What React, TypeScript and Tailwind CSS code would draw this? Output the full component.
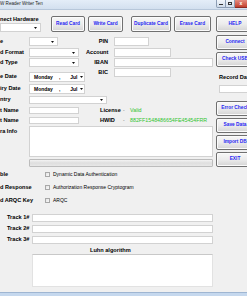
import React from 'react';

const btn =
  'flex shrink-0 items-center justify-center rounded-[2px] border border-[#707070] bg-linear-to-b from-[#f7f7f7] via-[#ececec] to-[#d4d4d4] text-[4.8px] font-bold leading-none text-[#2626f2] whitespace-nowrap shadow-[inset_0_0_0_1px_#fbfbfb]';
const field = 'shrink-0 bg-white border border-[#d2d2d2]';
const label = 'shrink-0 text-[5.6px] font-bold leading-none text-black whitespace-nowrap';

const Arrow = () => (
  <svg width="3" height="2" viewBox="0 0 3 2" className="shrink-0">
    <path d="M0 0h3L1.5 2z" fill="#111" />
  </svg>
);

const Combo = ({ className = '' }: { className?: string }) => (
  <div className={`${field} flex items-center justify-end pr-[3px] ${className}`}>
    <Arrow />
  </div>
);

const DateBox = () => (
  <div className={`${field} flex h-[10px] w-[56px] items-center pl-[4px] pr-[3px] text-[5px] font-bold leading-none`}>
    <span>Monday</span>
    <span className="ml-[6px]">,</span>
    <span className="ml-[10px]">Jul</span>
    <span className="ml-[2px]">
      <Arrow />
    </span>
  </div>
);

const Row = ({ text, children, className = '' }: { text: string; children: React.ReactNode; className?: string }) => (
  <div className={`flex items-center ${className}`}>
    <div className={`${label} w-[29px]`}>{text}</div>
    {children}
  </div>
);

const RightRow = ({ text, children, className = '' }: { text: string; children: React.ReactNode; className?: string }) => (
  <div className={`flex h-[9px] items-center ${className}`}>
    <div className={`${label} w-[24px] pr-[2px] text-right`}>{text}</div>
    <div className="ml-[4px] flex">{children}</div>
  </div>
);

const Check = ({ left, text }: { left: string; text: string }) => (
  <div className="flex h-[13px] items-center">
    <div className={`${label} w-[45px]`}>{left}</div>
    <div className="h-[5px] w-[5px] shrink-0 border border-[#a8a8a8] bg-linear-to-br from-[#e4e4e4] to-[#f8f8f8]" />
    <div className="ml-[3px] whitespace-nowrap text-[5px] leading-none text-black">{text}</div>
  </div>
);

const Track = ({ text, className = '' }: { text: string; className?: string }) => (
  <div className={`flex h-[8px] items-center ${className}`}>
    <div className={`${label} w-[32px] pl-[7px]`}>{text}</div>
    <div className={`${field} h-[8px] w-[181px]`} />
  </div>
);

export default function App() {
  return (
    <div className="flex h-[296px] w-[247px] flex-col overflow-hidden bg-[#f0f0f0] font-['Liberation_Sans',Arial,sans-serif]">
      {/* title bar */}
      <div className="flex h-[10px] shrink-0 items-start border-b border-[#b7c7da] bg-linear-to-b from-[#e4edf8] to-[#d3e0ef]">
        <div className="pt-[2px] text-[4.6px] leading-none text-[#1e1e1e] whitespace-nowrap">W Reader Writer Ten</div>
        <div className="ml-auto flex h-[8px]">
          <div className="flex w-[10px] items-end justify-center rounded-bl-[2px] border border-t-0 border-[#8c9db4] bg-linear-to-b from-[#f2f6fb] to-[#d0dcea] pb-[2px]">
            <div className="h-[1px] w-[4px] bg-[#333]" />
          </div>
          <div className="flex w-[9px] items-center justify-center border-b border-r border-[#8c9db4] bg-linear-to-b from-[#f2f6fb] to-[#d0dcea]">
            <div className="h-[3px] w-[4px] border border-[#333]" />
          </div>
          <div className="flex w-[12px] items-center justify-center border-b border-[#8a2a22] bg-linear-to-b from-[#e48b7f] to-[#c2402f] text-[5px] font-bold leading-none text-white">
            x
          </div>
        </div>
      </div>

      {/* body */}
      <div className="flex flex-1 pt-[6px]">
        <div className="flex w-[213px] shrink-0 flex-col">
          {/* hardware + top buttons */}
          <div className="flex h-[16px]">
            <div className="flex w-[41px] shrink-0 flex-col">
              <div className={`${label} h-[7px] pt-[1px]`}>nect Hardware</div>
              <Combo className="h-[9px] w-[41px]" />
            </div>
            <div className={`${btn} ml-[10px] w-[34px]`}>Read Card</div>
            <div className={`${btn} ml-[3px] w-[35px]`}>Write Card</div>
            <div className={`${btn} ml-[8px] w-[40px]`}>Duplicate Card</div>
            <div className={`${btn} ml-[3px] w-[37px]`}>Erase Card</div>
          </div>

          {/* card details */}
          <div className="mt-[5px] flex">
            <div className="flex w-[86px] shrink-0 flex-col">
              <Row text="e" className="h-[9px]">
                <Combo className="h-[9px] w-[29px]" />
              </Row>
              <Row text="d Format" className="mt-[2px] h-[9px]">
                <Combo className="h-[9px] w-[50px]" />
              </Row>
              <Row text="d Type" className="mt-[1px] h-[9px]">
                <Combo className="h-[9px] w-[50px]" />
              </Row>
              <Row text="e Date" className="mt-[5px] h-[10px]">
                <DateBox />
              </Row>
              <Row text="iry Date" className="mt-[2px] h-[10px]">
                <DateBox />
              </Row>
              <Row text="ntry" className="mt-[2px] h-[8px]">
                <Combo className="h-[8px] w-[78px]" />
              </Row>
              <Row text="t Name" className="mt-[3px] h-[7px]">
                <div className={`${field} h-[7px] w-[50px]`} />
              </Row>
              <Row text="t Name" className="mt-[3px] h-[7px]">
                <div className={`${field} h-[7px] w-[50px]`} />
              </Row>
            </div>

            <div className="flex flex-1 flex-col">
              <RightRow text="PIN">
                <div className={`${field} h-[9px] w-[35px]`} />
              </RightRow>
              <RightRow text="Account" className="mt-[2px]">
                <div className={`${field} h-[9px] w-[57px]`} />
              </RightRow>
              <RightRow text="IBAN" className="mt-[1px]">
                <div className={`${field} h-[9px] w-[99px]`} />
              </RightRow>
              <RightRow text="BIC" className="mt-[1px]">
                <div className={`${field} h-[9px] w-[57px]`} />
              </RightRow>
              <div className="mt-[30px] flex h-[7px] items-center pl-[14px]">
                <div className={`${label} w-[23px]`}>License</div>
                <div className="w-[7px] text-[5px] leading-none text-[#777]">-</div>
                <div className="text-[5.4px] leading-none text-[#2fc42f]">Valid</div>
              </div>
              <div className="mt-[3px] flex h-[7px] items-center pl-[14px]">
                <div className={`${label} w-[23px]`}>HWID</div>
                <div className="w-[7px] text-[5px] leading-none text-[#777]">-</div>
                <div className="whitespace-nowrap text-[5.3px] leading-none text-[#2fc42f]">882FF1548486654FE45454FRR</div>
              </div>
            </div>
          </div>

          {/* extra info */}
          <div className="mt-[2px] flex">
            <div className={`${label} w-[29px] pt-[3px]`}>ra Info</div>
            <div className={`${field} h-[31px] w-[184px]`} />
          </div>
          <div className="ml-[29px] mt-[2px] h-[8px] w-[184px] shrink-0 rounded-[1px] border border-[#bcbcbc] bg-linear-to-b from-[#f3f3f3] via-[#dedede] to-[#e8e8e8]" />

          {/* options */}
          <div className="mt-[1px] flex flex-col">
            <Check left="ble" text="Dynamic Data Authentication" />
            <Check left="d Response" text="Authorization Response Cryptogram" />
            <Check left="d ARQC Key" text="ARQC" />
          </div>

          {/* tracks */}
          <Track text="Track 1#" className="mt-[7px]" />
          <Track text="Track 2#" className="mt-[3px]" />
          <Track text="Track 3#" className="mt-[3px]" />

          <div className={`${label} mt-[3px] h-[7px] pl-[90px] pt-[1px]`}>Luhn algorithm</div>
          <div className="ml-[32px] h-[33px] w-[181px] shrink-0 border border-[#e2e2e2] border-t-[#c8c8c8] bg-white" />
        </div>

        {/* right button column */}
        <div className="ml-[3px] flex w-[38px] shrink-0 flex-col">
          <div className={`${btn} h-[16px]`}>HELP</div>
          <div className={`${btn} mt-[3px] h-[15px]`}>Connect</div>
          <div className={`${btn} mt-[2px] h-[15px]`}>Check USB</div>
          <div className={`${label} mt-[8px] h-[6px] pl-[3px]`}>Record Data</div>
          <div className={`${field} ml-[3px] mt-[4px] h-[8px] w-[35px]`} />
          <div className={`${btn} mt-[8px] h-[15px]`}>Error Check</div>
          <div className={`${btn} mt-[2px] h-[15px]`}>Save Data</div>
          <div className={`${btn} mt-[2px] h-[15px]`}>Import DB</div>
          <div className={`${btn} mt-[2px] h-[15px]`}>EXIT</div>
        </div>
      </div>

      {/* window frame bottom */}
      <div className="h-[4px] shrink-0 border-t border-[#9fb6d2] bg-[#c5d8ee]" />
    </div>
  );
}
